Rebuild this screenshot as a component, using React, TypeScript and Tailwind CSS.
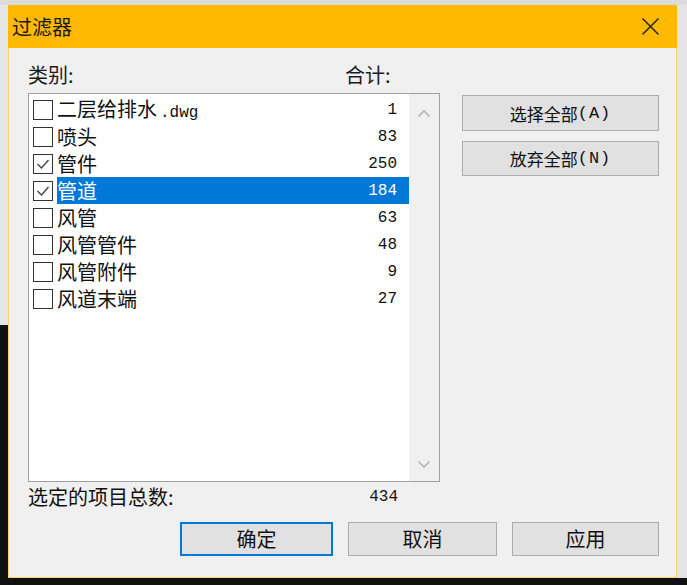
import React from "react";

const cjk = { fontFamily: '"Noto Sans CJK SC", "Noto Sans", sans-serif' };
const mono = { fontFamily: '"Liberation Mono", "Noto Sans CJK SC", monospace' };

type Row = { name: string; ext?: string; count: number; checked: boolean; selected?: boolean };

const rows: Row[] = [
  { name: "二层给排水", ext: ".dwg", count: 1, checked: false },
  { name: "喷头", count: 83, checked: false },
  { name: "管件", count: 250, checked: true },
  { name: "管道", count: 184, checked: true, selected: true },
  { name: "风管", count: 63, checked: false },
  { name: "风管管件", count: 48, checked: false },
  { name: "风管附件", count: 9, checked: false },
  { name: "风道末端", count: 27, checked: false },
];

function CheckBox({ checked }: { checked: boolean }) {
  return (
    <div className="w-[20px] h-[20px] border border-[#333333] bg-white flex items-center justify-center">
      {checked && (
        <svg width="16" height="16" viewBox="0 0 16 16">
          <polyline points="2.5,8 6.5,12 13.5,4" fill="none" stroke="#444" strokeWidth="1.4" />
        </svg>
      )}
    </div>
  );
}

export default function App() {
  return (
    <div className="w-[687px] h-[585px] bg-[#121212] flex flex-col overflow-hidden">
      <div className="h-[5px] bg-[#dcdcdc] shrink-0" />
      <div className="flex shrink-0">
        <div className="w-[8px] flex flex-col">
          <div className="h-[320px] bg-[#e6e6e6]" />
          <div className="flex-1 bg-[#111111]" />
        </div>
        <div className="w-[669px] h-[573px] flex flex-col">
          {/* Title bar */}
          <div className="h-[43px] bg-[#ffb900] flex items-center justify-between pl-[4px] pr-[17px] shrink-0">
            <span className="text-[20px] leading-none text-[#1a1a1a]" style={cjk}>过滤器</span>
            <svg width="19" height="19" viewBox="0 0 19 19">
              <path d="M1.5 1.5 L17.5 17.5 M17.5 1.5 L1.5 17.5" stroke="#222" strokeWidth="1.5" />
            </svg>
          </div>
          {/* Body */}
          <div className="flex-1 bg-[#f0f0f0] border-l border-r border-b border-[#f3d46c] pl-[19px] pr-[17px] pt-[17px] pb-[21px] flex flex-col">
            <div className="flex h-[20px] items-center text-[20px] leading-[20px] text-[#1a1a1a]" style={cjk}>
              <span className="w-[317px]">类别:</span>
              <span>合计:</span>
            </div>
            <div className="flex mt-[8px]">
              {/* List box */}
              <div className="w-[412px] h-[389px] border border-[#a0a0a0] bg-white flex">
                <div className="flex-1 pt-[2px] flex flex-col">
                  {rows.map((r) => (
                    <div key={r.name} className="h-[27px] flex items-center">
                      <div className="pl-[4px] pr-[4px] flex items-center">
                        <CheckBox checked={r.checked} />
                      </div>
                      <div
                        className={
                          "flex-1 h-[27px] flex items-center justify-between pr-[12px] " +
                          (r.selected ? "bg-[#0078d7] text-white" : "text-[#111111]")
                        }
                      >
                        <span className="text-[20px] leading-none whitespace-nowrap" style={cjk}>
                          <span>{r.name}</span>
                          {r.ext && (
                            <span className="text-[16px] ml-[3px]" style={mono}>{r.ext}</span>
                          )}
                        </span>
                        <span className="text-[16px] leading-none" style={mono}>{r.count}</span>
                      </div>
                    </div>
                  ))}
                </div>
                <div className="w-[30px] bg-[#f0f0f0] flex flex-col justify-between">
                  <div className="h-[38px] flex items-center justify-center">
                    <svg width="14" height="9" viewBox="0 0 14 9">
                      <polyline points="1.5,7.5 7,2 12.5,7.5" fill="none" stroke="#b5b5b5" strokeWidth="1.6" />
                    </svg>
                  </div>
                  <div className="h-[33px] flex items-center justify-center">
                    <svg width="14" height="9" viewBox="0 0 14 9">
                      <polyline points="1.5,1.5 7,7 12.5,1.5" fill="none" stroke="#b5b5b5" strokeWidth="1.6" />
                    </svg>
                  </div>
                </div>
              </div>
              {/* Right buttons */}
              <div className="ml-[22px] mt-[2px] flex flex-col gap-[10px]">
                <div className="w-[197px] h-[36px] bg-[#e1e1e1] border border-[#adadad] flex items-center justify-center text-[17px] text-[#111111]" style={cjk}>
                  <span className="leading-none">选择全部</span>
                  <span className="leading-none tracking-[1px]" style={mono}>(A)</span>
                </div>
                <div className="w-[197px] h-[35px] bg-[#e1e1e1] border border-[#adadad] flex items-center justify-center text-[17px] text-[#111111]" style={cjk}>
                  <span className="leading-none">放弃全部</span>
                  <span className="leading-none tracking-[1px]" style={mono}>(N)</span>
                </div>
              </div>
            </div>
            {/* Total */}
            <div className="mt-[5px] h-[20px] flex items-center w-[370px] justify-between text-[#111111]">
              <span className="text-[20px] leading-none" style={cjk}>选定的项目总数:</span>
              <span className="text-[16px] leading-none" style={mono}>434</span>
            </div>
            {/* Bottom buttons */}
            <div className="mt-[15px] flex justify-end gap-[15px]">
              <div className="w-[153px] h-[34px] bg-[#e1e1e1] border-2 border-[#0078d7] flex items-center justify-center text-[20px] text-[#111111]" style={cjk}>
                <span className="leading-none">确定</span>
              </div>
              <div className="w-[149px] h-[34px] bg-[#e1e1e1] border border-[#adadad] flex items-center justify-center text-[20px] text-[#111111]" style={cjk}>
                <span className="leading-none">取消</span>
              </div>
              <div className="w-[147px] h-[34px] bg-[#e1e1e1] border border-[#adadad] flex items-center justify-center text-[20px] text-[#111111]" style={cjk}>
                <span className="leading-none">应用</span>
              </div>
            </div>
          </div>
        </div>
        <div className="w-[10px] bg-[#e4e4e4]" />
      </div>
      <div className="flex-1 bg-[#111111]" />
    </div>
  );
}
